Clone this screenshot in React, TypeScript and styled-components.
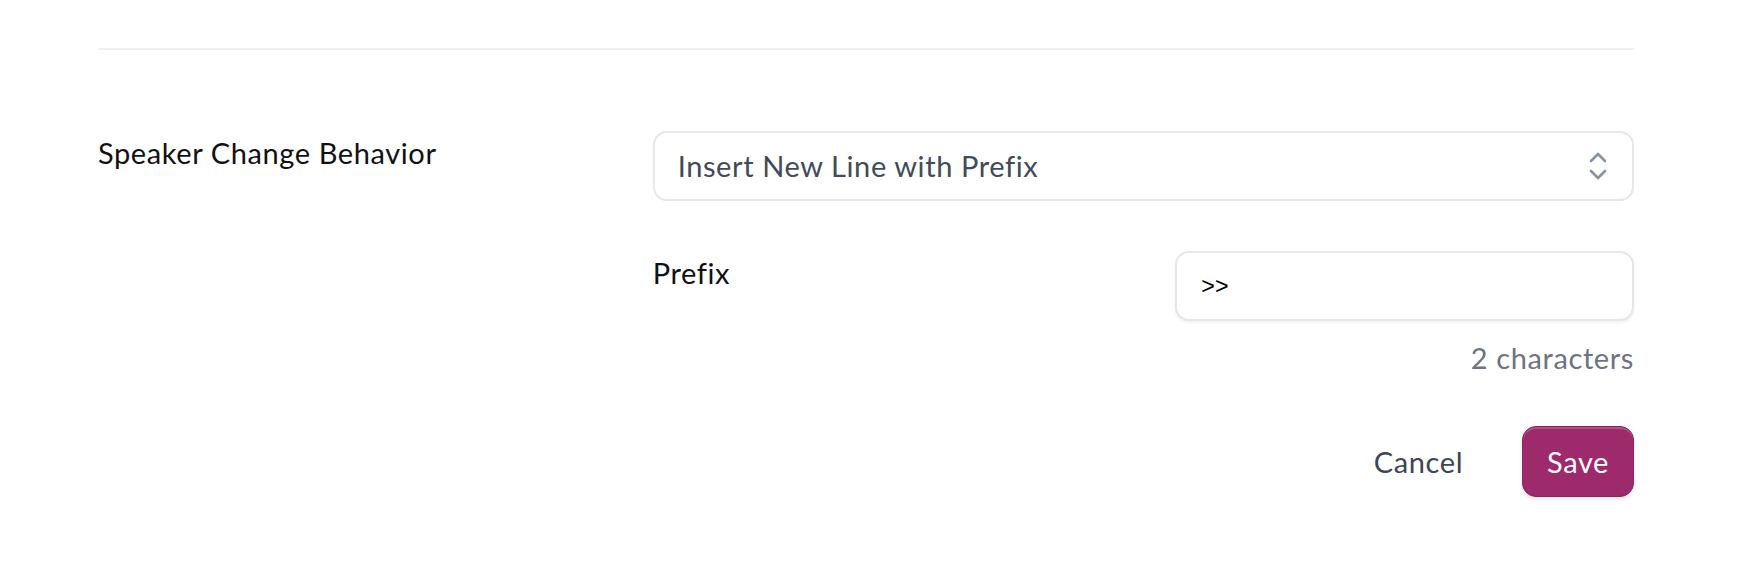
import React from "react";
import styled, { createGlobalStyle } from "styled-components";

const GlobalStyle = createGlobalStyle`
  html, body {
    margin: 0;
    padding: 0;
    background: #ffffff;
  }
  body {
    font-family: Lato, "Noto Sans", sans-serif;
    font-size: 29px;
    line-height: 42px;
    letter-spacing: 0.6px;
    color: #111114;
  }
  * { box-sizing: border-box; }
`;

const Page = styled.div`
  width: 1536px;
  margin-left: 98px;
  padding-top: 48px;
  padding-bottom: 79px;
`;

const Divider = styled.hr`
  margin: 0;
  border: 0;
  height: 2px;
  background: #f0f0f1;
`;

const FormGrid = styled.div`
  margin-top: 81px;
  display: grid;
  grid-template-columns: 1fr 2fr;
  column-gap: 64px;
  align-items: start;
`;

const FieldLabel = styled.label`
  display: block;
  font-size: 29px;
  line-height: 42px;
  color: #111114;
  padding-top: 1px;
`;

const FieldColumn = styled.div`
  display: flex;
  flex-direction: column;
  gap: 50px;
`;

const SelectBox = styled.div`
  height: 70px;
  display: flex;
  align-items: center;
  justify-content: space-between;
  padding: 0 25px 0 23px;
  border: 2px solid #e6e7ea;
  border-radius: 14px;
  background: #ffffff;
  color: #414a5b;
  font-size: 29px;
  line-height: 42px;
  cursor: pointer;
`;

const SubGrid = styled.div`
  display: grid;
  grid-template-columns: 1fr 1fr;
  column-gap: 64px;
  align-items: start;
`;

const InputColumn = styled.div`
  display: flex;
  flex-direction: column;
  align-items: stretch;
`;

const TextInput = styled.input`
  height: 70px;
  width: 100%;
  padding: 0 24px;
  border: 2px solid #e6e7ea;
  border-radius: 14px;
  background: #ffffff;
  box-shadow: 0 2px 3px rgba(16, 24, 40, 0.06);
  font-family: "Liberation Sans", Arial, sans-serif;
  font-size: 23.3px;
  letter-spacing: 0;
  color: #000000;
  outline: none;
`;

const Hint = styled.div`
  margin-top: 16px;
  text-align: right;
  color: #6b7385;
  font-size: 29px;
  line-height: 42px;
`;

const Footer = styled.div`
  margin-top: 47px;
  display: flex;
  justify-content: flex-end;
  align-items: center;
  gap: 34px;
`;

const Button = styled.button<{ $primary?: boolean }>`
  height: 71px;
  padding: 0 24px;
  border-radius: 14px;
  font-family: Lato, "Noto Sans", sans-serif;
  font-size: 29px;
  line-height: 42px;
  letter-spacing: 0.6px;
  cursor: pointer;
  border: ${(p) => (p.$primary ? "1px solid #8e2360" : "1px solid transparent")};
  background: ${(p) => (p.$primary ? "#9d2a6a" : "transparent")};
  color: ${(p) => (p.$primary ? "#ffffff" : "#3e4557")};
  box-shadow: ${(p) =>
    p.$primary
      ? "inset 0 2px 0 rgba(255,255,255,0.18), 0 2px 4px rgba(16,24,40,0.12)"
      : "none"};
`;

const ChevronUpDown = () => (
  <svg width="18" height="29" viewBox="0 0 18 29" fill="none" aria-hidden="true">
    <path
      d="M2 9 L9 2 L16 9"
      stroke="#8890a3"
      strokeWidth="2.6"
      strokeLinecap="round"
      strokeLinejoin="round"
    />
    <path
      d="M2 19 L9 26 L16 19"
      stroke="#8890a3"
      strokeWidth="2.6"
      strokeLinecap="round"
      strokeLinejoin="round"
    />
  </svg>
);

export default function App() {
  const [prefix, setPrefix] = React.useState(">>");
  return (
    <>
      <GlobalStyle />
      <Page>
        <Divider />
        <FormGrid>
          <FieldLabel>Speaker Change Behavior</FieldLabel>
          <FieldColumn>
            <SelectBox role="combobox" aria-expanded="false">
              <span>Insert New Line with Prefix</span>
              <ChevronUpDown />
            </SelectBox>
            <SubGrid>
              <FieldLabel htmlFor="prefix">Prefix</FieldLabel>
              <InputColumn>
                <TextInput
                  id="prefix"
                  value={prefix}
                  onChange={(e) => setPrefix(e.target.value)}
                />
                <Hint>{prefix.length} characters</Hint>
              </InputColumn>
            </SubGrid>
          </FieldColumn>
        </FormGrid>
        <Footer>
          <Button type="button">Cancel</Button>
          <Button type="button" $primary>
            Save
          </Button>
        </Footer>
      </Page>
    </>
  );
}
